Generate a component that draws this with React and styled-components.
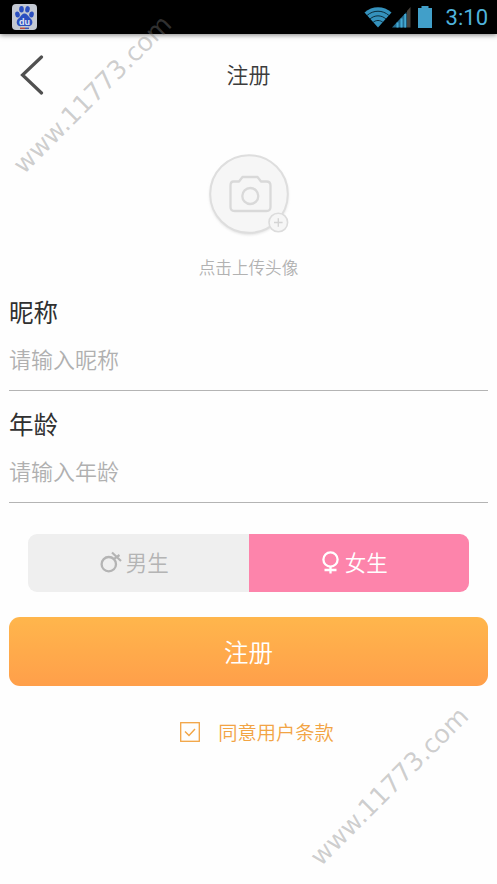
import { useState } from "react";
import styled, { createGlobalStyle } from "styled-components";

const GlobalStyle = createGlobalStyle`
  * {
    box-sizing: border-box;
  }

  body {
    margin: 0;
    background-color: #fefefe;
    font-family: "Noto Sans CJK SC", sans-serif;
    font-weight: 350;
  }
`;

const Screen = styled.div`
  position: relative;
  height: 884px;
  overflow: hidden;
`;

const StatusBar = styled.header`
  height: 34px;
  padding: 0 9px 0 12px;
  display: flex;
  align-items: center;
  justify-content: space-between;
  background-color: #000;
  box-shadow: 0 1px 5px rgba(0, 0, 0, 0.5);
`;

const StatusIcons = styled.div`
  display: flex;
  align-items: center;
`;

const Clock = styled.span`
  margin-left: 14px;
  font-family: Roboto, sans-serif;
  font-size: 22px;
  font-weight: 400;
  line-height: 34px;
  color: #4fb3dc;
  padding-top: 2px;
`;

const NavBar = styled.nav`
  height: 81px;
  padding: 0 20px;
  display: grid;
  grid-template-columns: 24px 1fr 24px;
  align-items: center;
`;

const Title = styled.h1`
  margin: 0;
  padding-bottom: 3px;
  font-size: 22px;
  font-weight: 350;
  line-height: 32px;
  text-align: center;
  color: #3c3c3c;
`;

const Upload = styled.div`
  height: 178px;
  padding-top: 34px;
  display: flex;
  flex-direction: column;
  align-items: center;
`;

const UploadTip = styled.p`
  margin: 20px 0 0;
  font-size: 16.6px;
  line-height: 24px;
  color: #b2b2b2;
`;

const Field = styled.label`
  height: 112px;
  margin: 0 9px;
  display: flex;
  flex-direction: column;
`;

const FieldName = styled.span`
  height: 38px;
  font-size: 24.5px;
  font-weight: 400;
  line-height: 38px;
  color: #303030;
`;

const FieldInput = styled.input`
  height: 60px;
  padding: 0 0 5px;
  border: none;
  border-bottom: 1px solid #b4b4b4;
  outline: none;
  background: transparent;
  font-family: inherit;
  font-size: 22px;
  font-weight: 350;
  color: #303030;

  &::placeholder {
    color: #b0b0b0;
    opacity: 1;
  }
`;

const GenderSwitch = styled.div`
  height: 58px;
  margin: 17px 28px 0;
  display: grid;
  grid-template-columns: 1fr 1fr;
  border-radius: 9px;
  overflow: hidden;
`;

const GenderButton = styled.button`
  padding: 0 8px 2px 0;
  display: flex;
  align-items: center;
  justify-content: center;
  gap: ${({ $gap }) => $gap}px;
  border: none;
  background-color: ${({ $active }) => ($active ? "#fd84ab" : "#efefef")};
  color: ${({ $active }) => ($active ? "#fff" : "#b4b4b4")};
  font-family: inherit;
  font-size: 21.5px;
  font-weight: 350;
  cursor: pointer;
`;

const GenderName = styled.span`
  padding-bottom: 2px;
`;

const SubmitButton = styled.button`
  width: calc(100% - 18px);
  height: 69px;
  margin: 25px 9px 0;
  padding: 0 0 1px;
  display: block;
  border: none;
  border-radius: 11px;
  background: linear-gradient(#ffb64c, #ff9f4a);
  font-family: inherit;
  font-size: 24.5px;
  font-weight: 350;
  color: #fff;
  cursor: pointer;
`;

const Terms = styled.label`
  margin: 31px 0 0 17px;
  height: 30px;
  display: flex;
  align-items: center;
  justify-content: center;
  gap: 18px;
  font-size: 19.3px;
  line-height: 30px;
  color: #f2a444;
`;

const Watermark = styled.div`
  position: absolute;
  left: ${({ $x }) => $x}px;
  top: ${({ $y }) => $y}px;
  font-family: "DejaVu Sans", sans-serif;
  font-size: 25.4px;
  font-weight: 400;
  line-height: 30px;
  white-space: nowrap;
  color: rgba(128, 128, 128, 0.38);
  transform: translate(-50%, -50%) rotate(-45deg);
  pointer-events: none;
`;

const BaiduIcon = () => (
  <svg width="25" height="26" viewBox="0 0 25 26">
    <rect width="25" height="26" rx="4" fill="#c3c8d2" />
    <g fill="#2b4fc0">
      <ellipse cx="5.5" cy="10.5" rx="2.3" ry="3" transform="rotate(-12 5.5 10.5)" />
      <ellipse cx="9.5" cy="5.3" rx="2.3" ry="3.2" />
      <ellipse cx="15.5" cy="5.3" rx="2.3" ry="3.2" transform="rotate(8 15.5 5.3)" />
      <ellipse cx="19.5" cy="10.5" rx="2.3" ry="3" transform="rotate(10 19.5 10.5)" />
      <path d="M12.5 9.5c2.2 0 3.3 2 4.6 3.4 1.6 1.7 3.5 2.9 3.3 5.5-.2 3-2.5 4-4.6 3.7-1.3-.2-5-.2-6.5 0-2.4.4-4.5-1-4.6-3.7-.1-2.6 1.7-3.7 3.3-5.4C9.3 11.5 10.3 9.5 12.5 9.5z" />
    </g>
    <text x="12.4" y="20.5" fontSize="9" fontWeight="700" fontFamily="Liberation Sans" textAnchor="middle" fill="#e3e8f4">
      du
    </text>
    <path d="M8 24.3h5" stroke="#b8483c" strokeWidth="1.5" />
    <path d="M13 24.3h4" stroke="#3a55b5" strokeWidth="1.5" />
  </svg>
);

const WifiIcon = () => (
  <svg width="28" height="22" viewBox="0 0 28 22">
    <path d="M0.5 6.5C8-.5 20-.5 27.5 6.5L14 21.5z" fill="#3592bd" />
    <g fill="none" stroke="#0b2c3b" strokeWidth="1">
      <path d="M3 9.5c6.3-5.7 15.7-5.7 22 0" />
      <path d="M6 13c4.6-4.2 11.4-4.2 16 0" />
      <path d="M9 16.5c3-2.7 7-2.7 10 0" />
    </g>
  </svg>
);

const SignalIcon = () => (
  <svg width="20" height="22" viewBox="0 0 20 22">
    <path d="M0 21.5L14.5 6v15.5z" fill="#246c90" />
    <path d="M5.5 21.5v-5M9.5 21.5v-9M13.3 21.5V8" stroke="#45a9d3" strokeWidth="2" />
    <path d="M15 21.5V5L18.5 1v20.5z" fill="#47423d" />
  </svg>
);

const BatteryIcon = () => (
  <svg width="20" height="22" viewBox="-6 0 20 22">
    <path d="M3.5 0h7v2H14v20H0V2h3.5z" fill="#419fc9" />
  </svg>
);

const BackIcon = () => (
  <svg width="24" height="40" viewBox="0 0 24 40">
    <path d="M21.5 2L2.5 20l19 18" fill="none" stroke="#505050" strokeWidth="3.2" strokeLinecap="round" />
  </svg>
);

const AvatarSvg = styled.svg`
  margin: -1px 0 -5px;
`;

const AvatarIcon = () => (
  <AvatarSvg width="92" height="92" viewBox="-6 -6 92 92">
    <defs>
      <filter id="soft" x="-20%" y="-20%" width="140%" height="140%">
        <feGaussianBlur stdDeviation="1.6" />
      </filter>
    </defs>
    <circle cx="40" cy="41.5" r="39" fill="#d8d8d8" filter="url(#soft)" />
    <circle cx="40" cy="40" r="38.8" fill="#f6f6f6" stroke="#dedede" strokeWidth="2" />
    <g fill="none" stroke="#d9d9d9" strokeWidth="2.3" strokeLinejoin="round">
      <path d="M24.5 27.5h5.5l3.5-4.5h15l3.5 4.5h5.500q4 0 4 4V53q0 4-4 4h-32q-4 0-4-4V31.500q0-4 3-4z" />
      <circle cx="41.3" cy="42" r="8" />
    </g>
    <circle cx="69.3" cy="68.5" r="9.3" fill="#f6f6f6" stroke="#dcdcdc" strokeWidth="1.6" />
    <path d="M65 68.5h8.6M69.3 64.2v8.6" stroke="#d4d4d4" strokeWidth="1.4" />
  </AvatarSvg>
);

const MaleIcon = () => (
  <svg width="22" height="22" viewBox="0 0 22 22" fill="none" stroke="currentColor" strokeWidth="2.3">
    <circle cx="8.8" cy="13.2" r="7.2" />
    <path d="M13.8 8.2L19.5 4M12 1.5l9 8.5" strokeWidth="2.2" />
  </svg>
);

const FemaleIcon = () => (
  <svg width="17" height="23" viewBox="0 0 17 23" fill="none" stroke="currentColor" strokeWidth="2.3">
    <circle cx="8.5" cy="8.5" r="7.1" />
    <path d="M8.5 15.5V22.5M2.5 19h12" />
  </svg>
);

const CheckIcon = ({ checked }) => (
  <svg width="20" height="20" viewBox="0 0 20 20" fill="none" stroke="currentColor">
    <rect x="0.7" y="0.7" width="18.6" height="18.6" strokeWidth="1.3" />
    {checked && <path d="M5 9.5l4 4 6-6.5" strokeWidth="1.4" />}
  </svg>
);

function App() {
  const [formValues, setFormValues] = useState({
    nickname: "",
    age: "",
    gender: "female",
  });
  const [agreed, setAgreed] = useState(true);

  const setValue = (name, value) => {
    setFormValues({ ...formValues, [name]: value });
  };

  return (
    <Screen>
      <GlobalStyle />
      <StatusBar>
        <BaiduIcon />
        <StatusIcons>
          <WifiIcon />
          <SignalIcon />
          <BatteryIcon />
          <Clock>3:10</Clock>
        </StatusIcons>
      </StatusBar>
      <NavBar>
        <BackIcon />
        <Title>注册</Title>
      </NavBar>
      <Upload>
        <AvatarIcon />
        <UploadTip>点击上传头像</UploadTip>
      </Upload>
      <Field>
        <FieldName>昵称</FieldName>
        <FieldInput
          type="text"
          placeholder="请输入昵称"
          value={formValues.nickname}
          onChange={(e) => setValue("nickname", e.target.value)}
        />
      </Field>
      <Field>
        <FieldName>年龄</FieldName>
        <FieldInput
          type="text"
          placeholder="请输入年龄"
          value={formValues.age}
          onChange={(e) => setValue("age", e.target.value)}
        />
      </Field>
      <GenderSwitch>
        <GenderButton
          $active={formValues.gender === "male"}
          $gap={4}
          onClick={() => setValue("gender", "male")}
        >
          <MaleIcon />
          <GenderName>男生</GenderName>
        </GenderButton>
        <GenderButton
          $active={formValues.gender === "female"}
          $gap={6}
          onClick={() => setValue("gender", "female")}
        >
          <FemaleIcon />
          <GenderName>女生</GenderName>
        </GenderButton>
      </GenderSwitch>
      <SubmitButton>注册</SubmitButton>
      <Terms onClick={() => setAgreed(!agreed)}>
        <CheckIcon checked={agreed} />
        同意用户条款
      </Terms>
      <Watermark $x={92} $y={94}>www.11773.com</Watermark>
      <Watermark $x={389} $y={786}>www.11773.com</Watermark>
    </Screen>
  );
}

export default App;
